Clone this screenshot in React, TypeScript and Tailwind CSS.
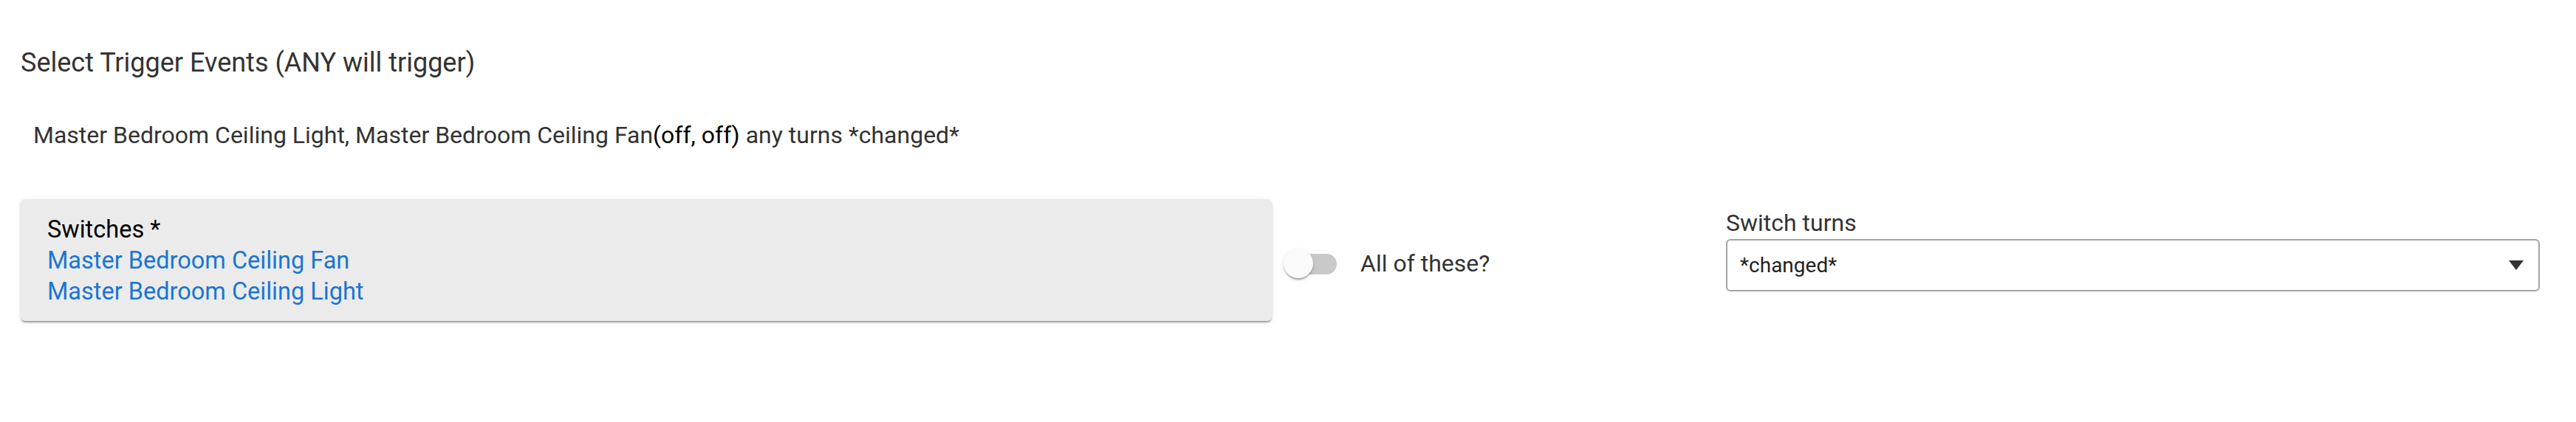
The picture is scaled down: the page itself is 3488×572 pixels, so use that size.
const devices = ['Master Bedroom Ceiling Fan', 'Master Bedroom Ceiling Light'];

const Toggle = () => (
    <div className="relative w-[72px] h-[40px] shrink-0">
        <div className="absolute left-[4px] top-[7px] w-[68px] h-[28px] rounded-full bg-[#c9c9c9]" />
        <div className="absolute left-0 top-0 w-[40px] h-[40px] rounded-full bg-[#fafafa] shadow-[0_4px_2px_-2px_rgba(0,0,0,0.2),0_2px_2px_0_rgba(0,0,0,0.14),0_2px_6px_0_rgba(0,0,0,0.12)]" />
    </div>
);

const App = () => {
    return (
        <div className="w-[3488px] h-[572px] bg-white font-['Roboto',sans-serif] text-[#333]">
            <div className="pl-[28px] pt-[65px]">
                {/* Header */}
                <h3 className="text-[36px] leading-[40px] font-normal">Select Trigger Events (ANY will trigger)</h3>
                <p className="mt-[58px] ml-[17px] text-[32px] leading-[40px]">
                    Master Bedroom Ceiling Light, Master Bedroom Ceiling Fan
                    <span className="text-black">(off, off)</span> any turns *changed*
                </p>

                {/* Trigger row */}
                <div className="mt-[67px] flex items-start">
                    <div className="w-[1694px] h-[165px] shrink-0 rounded-[6px] bg-[#ebebeb] pl-[36px] pt-[20px] text-[32.5px] leading-[42px] shadow-[0_4px_2px_-2px_rgba(0,0,0,0.2),0_2px_2px_0_rgba(0,0,0,0.14),0_2px_6px_0_rgba(0,0,0,0.12)]">
                        <div className="text-black">Switches *</div>
                        {devices.map((d) => (
                            <div key={d} className="text-[#1976d2]">{d}</div>
                        ))}
                    </div>

                    <div className="ml-[16px] mt-[67px] w-[599px] shrink-0 flex items-center gap-[32px]">
                        <Toggle />
                        <span className="text-[32px] leading-[40px]">All of these?</span>
                    </div>

                    <div className="mt-[13px] w-[1102px] shrink-0">
                        <label className="block text-[32px] leading-[38px]">Switch turns</label>
                        <div className="mt-[3px] h-[71px] border-2 border-[#a3a3a3] rounded-[6px] flex items-center justify-between pl-[17px] pr-[20px]">
                            <span className="text-[28px] leading-[32px] text-[#222]">*changed*</span>
                            <svg width="20" height="13" viewBox="0 0 20 13">
                                <path d="M0 0 H20 L10 13 Z" fill="#333" />
                            </svg>
                        </div>
                    </div>
                </div>
            </div>
        </div>
    );
};

export default App;
